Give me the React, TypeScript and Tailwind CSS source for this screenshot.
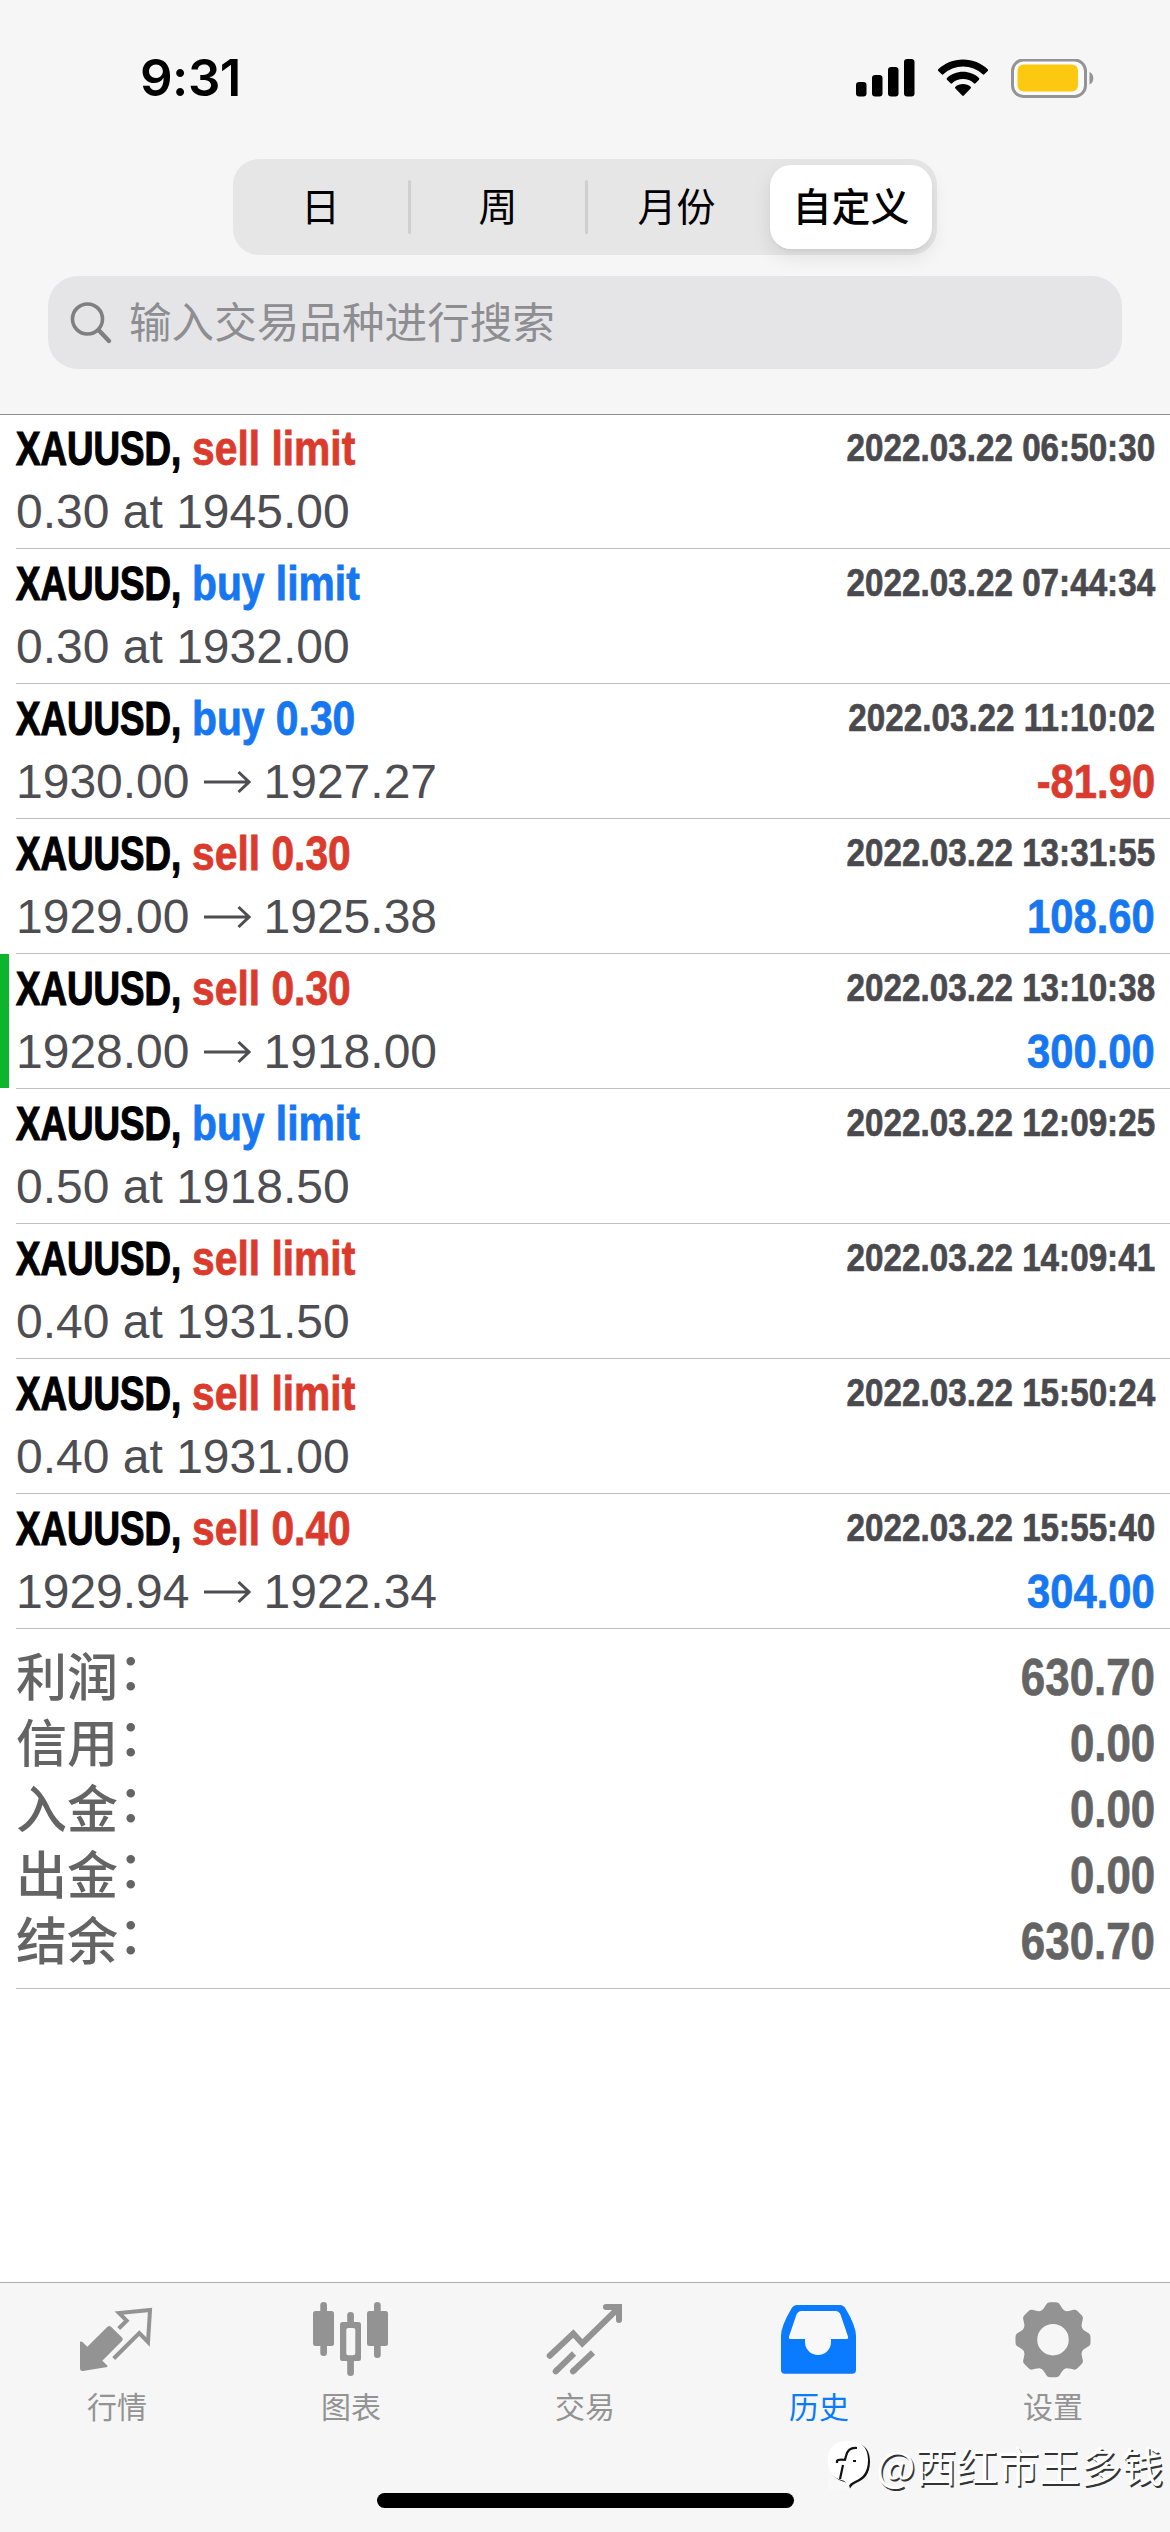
import { ReactNode } from 'react';
import { clsx } from 'clsx';

type Side = 'buy' | 'sell';

interface Deal {
  symbol: string;
  side: Side;
  action: string;
  time: string;
  volume?: string;
  open?: string;
  close?: string;
  profit?: string;
  marked?: boolean;
}

const deals: Deal[] = [
  { symbol: 'XAUUSD', side: 'sell', action: 'sell limit', time: '2022.03.22 06:50:30', volume: '0.30 at 1945.00' },
  { symbol: 'XAUUSD', side: 'buy', action: 'buy limit', time: '2022.03.22 07:44:34', volume: '0.30 at 1932.00' },
  { symbol: 'XAUUSD', side: 'buy', action: 'buy 0.30', time: '2022.03.22 11:10:02', open: '1930.00', close: '1927.27', profit: '-81.90' },
  { symbol: 'XAUUSD', side: 'sell', action: 'sell 0.30', time: '2022.03.22 13:31:55', open: '1929.00', close: '1925.38', profit: '108.60' },
  { symbol: 'XAUUSD', side: 'sell', action: 'sell 0.30', time: '2022.03.22 13:10:38', open: '1928.00', close: '1918.00', profit: '300.00', marked: true },
  { symbol: 'XAUUSD', side: 'buy', action: 'buy limit', time: '2022.03.22 12:09:25', volume: '0.50 at 1918.50' },
  { symbol: 'XAUUSD', side: 'sell', action: 'sell limit', time: '2022.03.22 14:09:41', volume: '0.40 at 1931.50' },
  { symbol: 'XAUUSD', side: 'sell', action: 'sell limit', time: '2022.03.22 15:50:24', volume: '0.40 at 1931.00' },
  { symbol: 'XAUUSD', side: 'sell', action: 'sell 0.40', time: '2022.03.22 15:55:40', open: '1929.94', close: '1922.34', profit: '304.00' },
];

const totals = [
  { label: '利润', value: '630.70' },
  { label: '信用', value: '0.00' },
  { label: '入金', value: '0.00' },
  { label: '出金', value: '0.00' },
  { label: '结余', value: '630.70' },
];

const gearTeeth = [0, 45, 90, 135, 180, 225, 270, 315];

function StatusBar() {
  return (
    <div className="flex h-[159px] items-start justify-between pl-[140px] pr-[76px] pt-[46px]">
      <div className="font-['Inter'] text-[51px] font-semibold leading-[64px] tracking-[-0.5px] text-black">9:31</div>
      <div className="flex items-center gap-[22px] pt-[13px]">
        <svg width="60" height="39" viewBox="0 0 60 39">
          <rect x="0" y="23" width="10.5" height="14.5" rx="3.2" />
          <rect x="16" y="16" width="10.5" height="21.5" rx="3.2" />
          <rect x="32" y="8" width="10.5" height="29.5" rx="3.2" />
          <rect x="48" y="0" width="10.5" height="37.5" rx="3.2" />
        </svg>
        <svg width="51" height="39" viewBox="0 0 51 39">
          <path d="M25 0.5C34.600 0.500 43.300 4.200 49.700 10.200Q50.500 11 49.700 11.900L46.300 15.300Q45.500 16 44.700 15.300A29 29 0 0 0 5.300 15.300Q4.500 16 3.700 15.300L0.300 11.900Q-0.500 11 0.300 10.200C6.700 4.200 15.400 0.500 25 0.500Z" />
          <path d="M25 12.800C31.200 12.800 36.800 15.100 41 19Q41.900 19.900 41 20.700L37.500 24.300Q36.700 25 35.900 24.300A16.300 16.300 0 0 0 14.100 24.300Q13.300 25 12.500 24.300L9 20.700Q8.100 19.900 9 19C13.200 15.100 18.800 12.800 25 12.800Z" />
          <path d="M25 25C28 25 30.600 26 32.600 27.800Q33.400 28.600 32.600 29.400L25.800 36.600Q25 37.400 24.200 36.600L17.400 29.400Q16.600 28.600 17.400 27.800C19.400 26 22 25 25 25Z" />
        </svg>
        <svg width="83" height="39" viewBox="0 0 83 39">
          <rect x="1.500" y="1" width="73" height="36.500" rx="11" fill="#fff" fillOpacity="0.6" stroke="#949497" strokeWidth="3" />
          <rect x="6.500" y="5.500" width="60.500" height="27" rx="6" fill="#fcc910" />
          <path d="M78.500 13C83.500 14.500 83.500 24 78.500 25.500Z" fill="#949497" />
        </svg>
      </div>
    </div>
  );
}

function PeriodTabs() {
  return (
    <div className="flex justify-center">
      <div className="flex h-24 w-[704px] items-center rounded-[26px] bg-[#e6e6e6] font-['Noto_Sans_CJK_SC',sans-serif] text-[39px] leading-none text-black">
        <div className="flex w-[175px] justify-center pb-[5px]">日</div>
        <div className="h-[54px] w-[3px] rounded-full bg-[#cfcfd0]" />
        <div className="flex w-[174px] justify-center pb-[5px]">周</div>
        <div className="h-[54px] w-[3px] rounded-full bg-[#cfcfd0]" />
        <div className="flex w-[177px] justify-center pb-[5px]">月份</div>
        <div className="ml-[5px] flex h-[84px] w-[162px] items-center justify-center rounded-[21px] bg-white pb-[5px] font-medium shadow-[0_8px_20px_rgba(0,0,0,0.09),0_2px_3px_rgba(0,0,0,0.04)]">
          自定义
        </div>
      </div>
    </div>
  );
}

function SearchField() {
  return (
    <div className="mx-12 mt-[21px] flex h-[93px] items-center rounded-[30px] bg-[#e5e5e8] pl-[22px]">
      <svg width="44" height="44" viewBox="0 0 44 44" fill="none" stroke="#7f7f83" strokeLinecap="round">
        <circle cx="17.500" cy="18" r="15" strokeWidth="3.600" />
        <path d="M29 29.500L39 40" strokeWidth="4.400" />
      </svg>
      <span className="ml-[15px] pb-[4px] font-['Noto_Sans_CJK_SC',sans-serif] text-[42.6px] leading-none text-[#8e8e92]">输入交易品种进行搜索</span>
    </div>
  );
}

function DealRow({ deal }: { deal: Deal }) {
  const negative = deal.profit?.startsWith('-');
  return (
    <div className="relative h-[135px] pl-4">
      {deal.marked && <div className="absolute left-0 top-0 h-[134px] w-[9px] bg-[#0cb52b]" />}
      <div className="flex h-full justify-between border-b border-[#bfbfc1] pr-[15px] font-['Liberation_Sans',Arial,sans-serif]">
        <div>
          <div className="flex h-[62px] items-end text-[48px] font-bold leading-[54px]">
            <div className="w-[176px]">
              <span className="inline-block origin-left scale-x-[0.765] text-black [-webkit-text-stroke:1.2px_currentColor]">{deal.symbol},</span>
            </div>
            <span
              className={clsx(
                'inline-block origin-left scale-x-[0.85] whitespace-nowrap [-webkit-text-stroke:0.8px_currentColor]',
                deal.side === 'sell' ? 'text-[#da3b2d]' : 'text-[#1677f0]'
              )}
            >
              {deal.action}
            </span>
          </div>
          <div className="mt-[9px] flex items-center text-[48px] leading-[54px] text-[#4e4e52]">
            {deal.volume ?? (
              <>
                {deal.open}
                <svg className="ml-[14px] mr-[13px]" width="47" height="24" viewBox="0 0 47 24" fill="none" stroke="currentColor" strokeWidth="3">
                  <path d="M0 12H45M34.500 2L45 12L34.500 22" />
                </svg>
                {deal.close}
              </>
            )}
          </div>
        </div>
        <div className="flex flex-col items-end whitespace-nowrap font-bold [-webkit-text-stroke:0.7px_currentColor]">
          <div className="mt-[11px] origin-right scale-x-[0.852] text-[39px] leading-[46px] text-[#4a4a4e]">{deal.time}</div>
          {deal.profit && (
            <div className={clsx('mt-[14px] origin-right scale-x-[0.87] text-[48px] leading-[54px]', negative ? 'text-[#da3b2d]' : 'text-[#1677f0]')}>
              {deal.profit}
            </div>
          )}
        </div>
      </div>
    </div>
  );
}

function Totals() {
  return (
    <div className="ml-4 h-[360px] border-b border-[#bfbfc1] pr-[15px] pt-[12px] text-[51px] leading-[66px] text-[#646464]">
      {totals.map(t => (
        <div key={t.label} className="flex h-[66px] items-center justify-between">
          <span className="flex font-['Noto_Sans_CJK_SC',sans-serif] font-medium">
            {t.label}
            <span className="-mt-[6px] h-[66px] pb-[6px]">：</span>
          </span>
          <span className="origin-right scale-x-[0.86] pt-[7px] font-['Liberation_Sans',Arial,sans-serif] font-bold [-webkit-text-stroke:0.7px_currentColor]">
            {t.value}
          </span>
        </div>
      ))}
    </div>
  );
}

function QuotesIcon() {
  return (
    <svg width="80" height="80" viewBox="0 0 80 80" fill="currentColor">
      <path d="M3 41.700Q4.500 41 5.500 42L10.300 46.700L30.500 26.800Q32.300 25 34 26.800L45 37.500Q46.800 39.300 45 41L25.300 60.700L30.300 65.500V67L6 71Q3 71.300 3 68.500Z" />
      <path d="M41.700 28.500L49.700 20.700L42 13L73 10L71 42L62.300 33L36.700 58.500" fill="none" stroke="currentColor" strokeWidth="4" />
    </svg>
  );
}

function ChartIcon() {
  return (
    <svg width="80" height="80" viewBox="0 0 80 80" fill="currentColor">
      <rect x="9.300" y="2" width="6.700" height="54" rx="3.300" />
      <rect x="2" y="11" width="21" height="35" rx="2.500" />
      <rect x="36.200" y="12" width="6.700" height="15" rx="3.300" />
      <rect x="36.200" y="58" width="6.700" height="18" rx="3.300" />
      <path fillRule="evenodd" d="M31.500 22H47.500Q50 22 50 24.500V58.500Q50 61 47.500 61H31.500Q29 61 29 58.500V24.500Q29 22 31.500 22ZM37.300 28Q35.300 28 35.300 30V53.300Q35.300 55.300 37.300 55.300H42.300Q44.300 55.300 44.300 53.300V30Q44.300 28 42.300 28Z" />
      <rect x="63" y="2" width="6.700" height="56" rx="3.300" />
      <rect x="56" y="11" width="21" height="35" rx="2.500" />
    </svg>
  );
}

function TradeIcon() {
  return (
    <svg width="80" height="80" viewBox="0 0 80 80" fill="none" stroke="currentColor" strokeWidth="6">
      <path d="M4.700 55.700L28.300 33.500L37.300 43.500L73.500 8" strokeLinecap="round" />
      <path d="M61 7H74V20" strokeLinecap="round" />
      <path d="M10.700 71.300L29 53.500M28 71.300L48 52.500" />
      <path d="M10.700 71.300L12 70M28 71.300L29.500 70" strokeLinecap="round" />
    </svg>
  );
}

function HistoryIcon() {
  return (
    <svg width="80" height="80" viewBox="0 0 80 80">
      <path d="M18 5H61Q64.500 5 66.500 8.500Q77 26 77 36V70Q77 73.700 73.300 73.700H5.700Q2 73.700 2 70V36Q2 26 12.500 8.500Q14.500 5 18 5Z" fill="currentColor" />
      <path d="M22.500 11H56.500Q60 11 61.500 14.500L69 36.500Q69.600 39 67.500 39H52V42A13 13 0 0 1 26 42V39H11.500Q9.400 39 10 36.500L17.500 14.500Q19 11 22.500 11Z" fill="#f8f8f8" />
    </svg>
  );
}

function SettingsIcon() {
  return (
    <svg width="80" height="80" viewBox="0 0 80 80" fill="currentColor">
      <circle cx="40" cy="39.700" r="23.500" fill="none" stroke="currentColor" strokeWidth="15.500" />
      {gearTeeth.map(a => (
        <path key={a} d="M27 12Q30.500 9.500 32 6.500L33.500 4Q34.500 2.200 37 2.200H43Q45.500 2.200 46.500 4L48 6.500Q49.500 9.500 53 12Z" transform={`rotate(${a} 40 39.700)`} />
      ))}
    </svg>
  );
}

function NavItem({ icon, label, active }: { icon: ReactNode; label: string; active?: boolean }) {
  return (
    <div className={clsx('flex w-[234px] flex-col items-center pt-[17px]', active ? 'text-[#0a7aff]' : 'text-[#939393]')}>
      {icon}
      <span className="mt-[8px] font-['Noto_Sans_CJK_SC',sans-serif] text-[30px] leading-[34px]">{label}</span>
    </div>
  );
}

function Watermark() {
  return (
    <div className="absolute bottom-[42px] right-[7px] flex items-center text-white">
      <svg width="48" height="52" viewBox="0 0 48 52">
        <path d="M20 3C32 3 40 8 40 22C40 35 34 40 27 43Q22 45 20 49Q19 43 13 42C4 39 0 33 0 22C0 8 8 3 20 3Z" fill="#111" transform="translate(2 1.500)" />
        <path d="M20 3C32 3 40 8 40 22C40 35 34 40 27 43Q22 45 20 49Q19 43 13 42C4 39 0 33 0 22C0 8 8 3 20 3Z" fill="#fff" />
        {/* covers the left half of the shadow */}
        <path d="M0 26C0 36 6 43 14 45L20 48L18 52H0Z" fill="#f8f8f8" />
        <path d="M29 10Q20 9 18 18L17 22M9 25V23Q10 21 18 22M15 27L12 41M25 23H28" fill="none" stroke="#111" strokeWidth="2.200" />
      </svg>
      <span className="font-['Noto_Sans_CJK_SC',sans-serif] text-[41.3px] leading-[52px] [text-shadow:1.5px_1.5px_0.5px_#333]">@西红市王多钱</span>
    </div>
  );
}

export default function App() {
  return (
    <div className="relative flex h-[2532px] w-[1170px] flex-col overflow-hidden bg-white">
      <header className="relative z-10 h-[415px] shrink-0 border-b border-[#8f8f91] bg-[#f6f6f6]">
        <StatusBar />
        <PeriodTabs />
        <SearchField />
      </header>

      <main className="-mt-px flex-1">
        {deals.map(d => (
          <DealRow key={d.time} deal={d} />
        ))}
        <Totals />
      </main>

      <nav className="relative h-[250px] shrink-0 border-t border-[#adadaf] bg-[#f6f6f6]">
        <div className="flex">
          <NavItem icon={<QuotesIcon />} label="行情" />
          <NavItem icon={<ChartIcon />} label="图表" />
          <NavItem icon={<TradeIcon />} label="交易" />
          <NavItem icon={<HistoryIcon />} label="历史" active />
          <NavItem icon={<SettingsIcon />} label="设置" />
        </div>
        <div className="absolute bottom-[24px] left-[377px] h-[15px] w-[417px] rounded-full bg-black" />
        <Watermark />
      </nav>
    </div>
  );
}
